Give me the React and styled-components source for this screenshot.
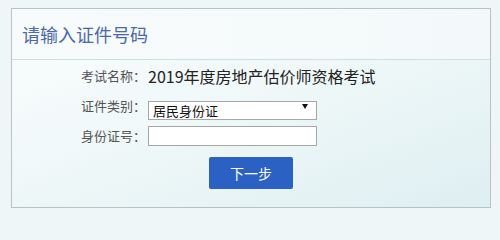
import React from "react";
import styled, { createGlobalStyle } from "styled-components";

const Global = createGlobalStyle`
  html, body { margin: 0; padding: 0; }
  body {
    background: #eef6f8;
    font-family: "Noto Sans CJK SC", "Microsoft YaHei", sans-serif;
    width: 500px;
    height: 216px;
    overflow: hidden;
  }
`;

const Page = styled.div`
  padding: 8px 9px 0 11px;
`;

const Panel = styled.section`
  box-sizing: border-box;
  width: 480px;
  height: 200px;
  border: 1px solid #b9c1c4;
  background: linear-gradient(160deg, #fbfdfd 0%, #f0f8f9 45%, #deeff1 100%);
  display: flex;
  flex-direction: column;
`;

const Header = styled.header`
  height: 50px;
  border-bottom: 1px solid #d3dde0;
  display: flex;
  align-items: center;
  padding-left: 10px;
  background: linear-gradient(90deg, #f8fbfc, #f3f9fa);
`;

const Title = styled.h2`
  margin: 0;
  font-size: 18px;
  font-weight: 400;
  color: #4a69a8;
  margin-top: -1px;
`;

const Form = styled.div`
  display: grid;
  grid-template-columns: 134px 1fr;
  column-gap: 2px;
  row-gap: 10px;
  padding-top: 6px;
  align-items: center;
`;

const Label = styled.span`
  text-align: right;
  font-size: 13px;
  color: #555;
  line-height: 20px;
  height: 20px;
`;

const Value = styled.span`
  font-size: 16px;
  color: #222;
  line-height: 20px;
  margin-top: -1px;
`;

const SelectWrap = styled.div`
  position: relative;
  width: 169px;
  height: 19px;
`;

const Select = styled.select`
  appearance: none;
  -webkit-appearance: none;
  box-sizing: border-box;
  width: 100%;
  height: 100%;
  border: 1px solid #a7a7a7;
  border-radius: 0;
  background: #fff;
  font-family: "Noto Sans CJK SC", sans-serif;
  font-size: 13px;
  color: #111;
  padding: 0 0 0 4px;
  line-height: 17px;
  outline: none;
`;

const Arrow = styled.span`
  position: absolute;
  right: 9px;
  top: 7px;
  width: 0;
  height: 0;
  border-left: 3.5px solid transparent;
  border-right: 3.5px solid transparent;
  border-top: 5px solid #111;
  pointer-events: none;
`;

const Input = styled.input`
  box-sizing: border-box;
  width: 169px;
  height: 20px;
  border: 1px solid #a7a7a7;
  background: #fff;
  padding: 0 3px;
  outline: none;
`;

const Actions = styled.div`
  display: flex;
  justify-content: center;
  padding-top: 11px;
`;

const Button = styled.button`
  width: 84px;
  height: 32px;
  border: none;
  border-radius: 2px;
  background: #2a61c2;
  color: #fff;
  font-family: "Noto Sans CJK SC", sans-serif;
  font-size: 14px;
  cursor: pointer;
`;

export default function App() {
  return (
    <>
      <Global />
      <Page>
        <Panel>
          <Header>
            <Title>请输入证件号码</Title>
          </Header>
          <Form>
            <Label>考试名称：</Label>
            <Value>2019年度房地产估价师资格考试</Value>
            <Label>证件类别：</Label>
            <SelectWrap>
              <Select defaultValue="id">
                <option value="id">居民身份证</option>
              </Select>
              <Arrow />
            </SelectWrap>
            <Label>身份证号：</Label>
            <Input type="text" />
          </Form>
          <Actions>
            <Button>下一步</Button>
          </Actions>
        </Panel>
      </Page>
    </>
  );
}
